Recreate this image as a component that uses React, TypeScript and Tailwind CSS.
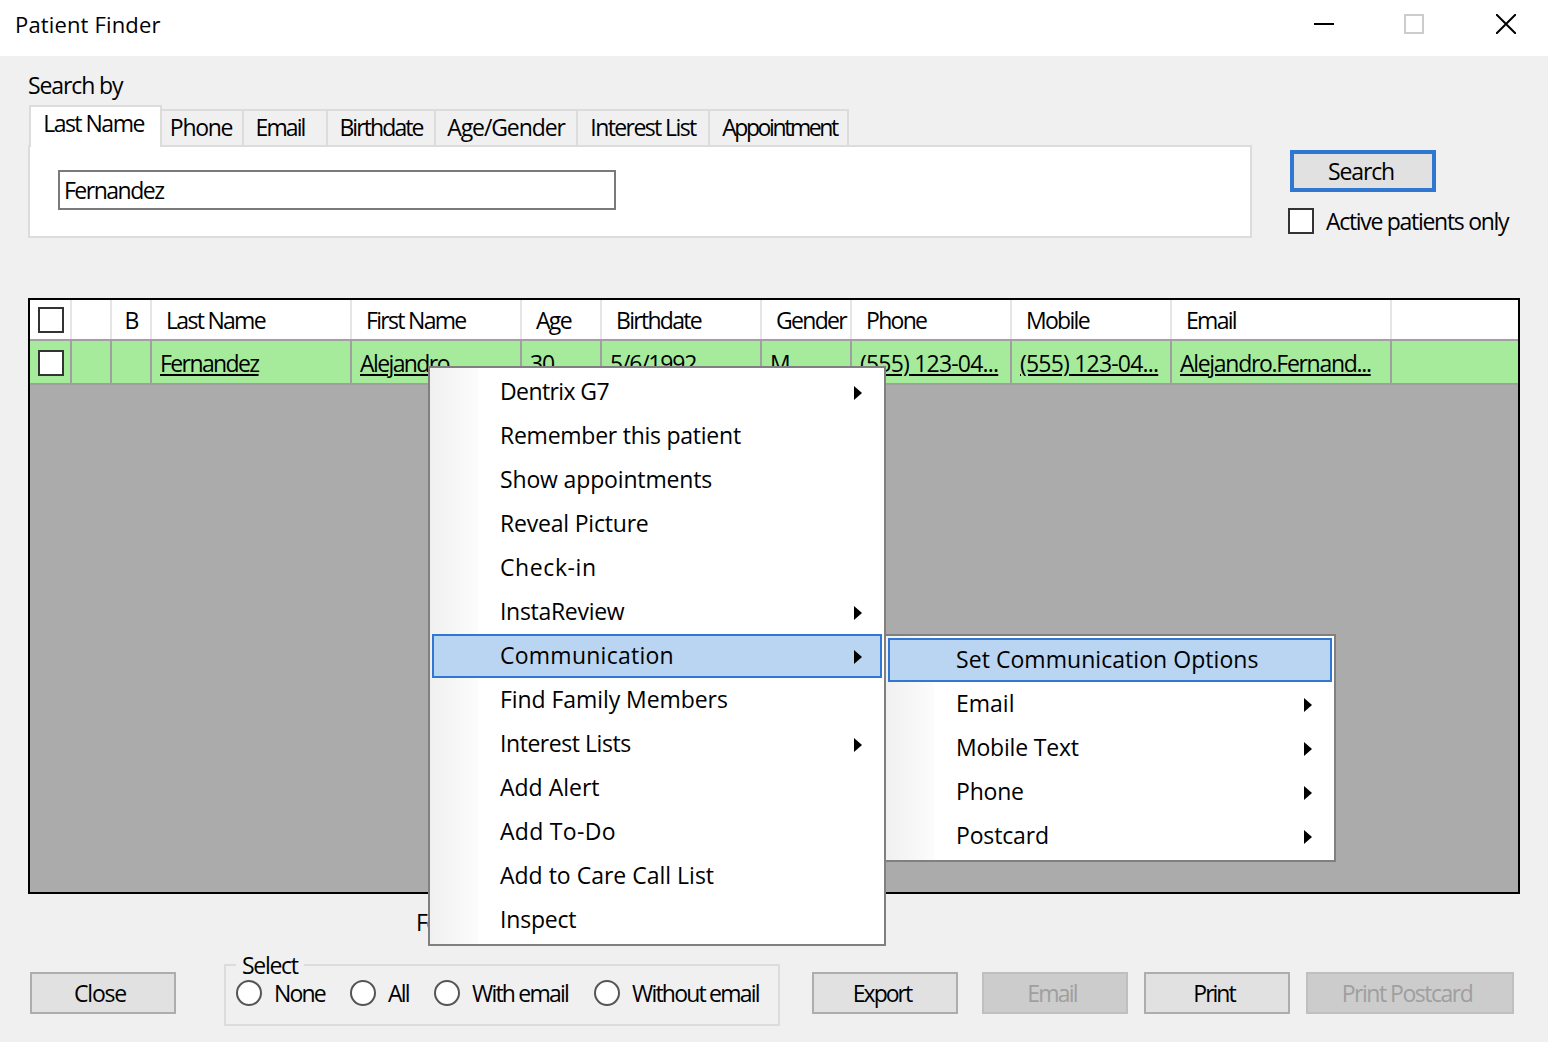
import React from 'react';

const tabs = [
  { label: 'Phone', w: 'w-[82px] pr-0.5', t: 'tracking-[-1.3px]' },
  { label: 'Email', w: 'w-[84px] pr-2.5', t: 'tracking-[-1.9px]' },
  { label: 'Birthdate', w: 'w-[108px]', t: 'tracking-[-1.9px]' },
  { label: 'Age/Gender', w: 'w-[142px]', t: 'tracking-[-1.1px]' },
  { label: 'Interest List', w: 'w-[132px]', t: 'tracking-[-1.6px]' },
  { label: 'Appointment', w: 'w-[139px] pl-0.5', t: 'tracking-[-2.4px]' },
];

const gridCols = 'grid grid-cols-[42px_40px_40px_200px_170px_80px_160px_90px_160px_160px_220px_1fr]';

const headers = ['Last Name', 'First Name', 'Age', 'Birthdate', 'Gender', 'Phone', 'Mobile', 'Email'];
const cells = [
  { v: 'Fernandez', t: 'tracking-[-1.6px]' },
  { v: 'Alejandro', t: 'tracking-[-1.6px]' },
  { v: '30', t: 'tracking-[-1.2px]' },
  { v: '5/6/1992', t: 'tracking-[-1.2px]' },
  { v: 'M', t: 'tracking-[-1.2px]' },
  { v: '(555) 123-04...', t: 'tracking-[-0.8px]' },
  { v: '(555) 123-04...', t: 'tracking-[-0.8px]' },
  { v: 'Alejandro.Fernand...', t: 'tracking-[-1.3px]' },
];

type Item = { label: string; sub?: boolean; active?: boolean; t?: string };

const mainMenu: Item[] = [
  { label: 'Dentrix G7', sub: true, t: 'tracking-[-0.6px]' },
  { label: 'Remember this patient', t: 'tracking-[-0.25px]' },
  { label: 'Show appointments', t: 'tracking-[-0.15px]' },
  { label: 'Reveal Picture', t: 'tracking-[-0.2px]' },
  { label: 'Check-in', t: 'tracking-[0.6px]' },
  { label: 'InstaReview', sub: true, t: 'tracking-[-0.3px]' },
  { label: 'Communication', sub: true, active: true, t: 'tracking-[0.25px]' },
  { label: 'Find Family Members', t: 'tracking-[-0.07px]' },
  { label: 'Interest Lists', sub: true, t: 'tracking-[-0.45px]' },
  { label: 'Add Alert', t: 'tracking-[0px]' },
  { label: 'Add To-Do', t: 'tracking-[0.3px]' },
  { label: 'Add to Care Call List', t: 'tracking-[0px]' },
  { label: 'Inspect', t: 'tracking-[-0.2px]' },
];

const subMenu: Item[] = [
  { label: 'Set Communication Options', active: true, t: 'tracking-[0.05px]' },
  { label: 'Email', sub: true, t: 'tracking-[0px]' },
  { label: 'Mobile Text', sub: true, t: 'tracking-[-0.2px]' },
  { label: 'Phone', sub: true, t: 'tracking-[-0.2px]' },
  { label: 'Postcard', sub: true, t: 'tracking-[-0.15px]' },
];

function Box() {
  return <div className="w-[26px] h-[26px] border-2 border-[#333] bg-white shrink-0" />;
}

function Button({ label, disabled, w }: { label: string; disabled?: boolean; w: string }) {
  return (
    <div
      className={`${w} h-[42px] flex items-center justify-center pr-1.5 border-2 ${
        disabled ? 'bg-[#cccccc] border-[#bfbfbf] text-[#9f9f9f]' : 'bg-[#e1e1e1] border-[#adadad] text-black'
      }`}
    >
      {label}
    </div>
  );
}

function Radio({ label, className }: { label: string; className: string }) {
  return (
    <div className={`flex items-center gap-3 h-[26px] ${className}`}>
      <div className="w-[26px] h-[26px] rounded-full border-2 border-[#555] bg-white shrink-0" />
      <span>{label}</span>
    </div>
  );
}

function Arrow() {
  return (
    <svg width="8" height="14" viewBox="0 0 8 14" className="shrink-0 mt-0.5">
      <path d="M0 0 L8 7 L0 14 Z" fill="#000" />
    </svg>
  );
}

function MenuRow({ item }: { item: Item }) {
  return (
    <div
      className={`relative h-[44px] flex items-center ${
        item.active ? 'bg-[#b9d5f1] border-2 border-[#2f77d0] pl-[66px] pr-[18px]' : 'pl-[68px] pr-5'
      }`}
    >
      <span className={`flex-1 pb-0.5 ${item.t}`}>{item.label}</span>
      {item.sub && <Arrow />}
    </div>
  );
}

export default function App() {
  return (
    <div className="relative w-[1548px] h-[1042px] overflow-hidden bg-[#f0f0f0] text-black font-['Open_Sans',sans-serif] text-[23px] tracking-[-1.5px]">
      {/* title bar */}
      <div className="h-14 bg-white flex items-center pl-[15px] pb-2">
        <span className="flex-1 tracking-[0.15px] text-[22px]">Patient Finder</span>
        <div className="w-5 h-0.5 bg-black" />
        <div className="w-5 h-5 ml-[70px] border-2 border-[#cccccc]" />
        <svg width="20" height="20" viewBox="0 0 20 20" className="ml-[72px] mr-8">
          <path d="M0 0 L20 20 M20 0 L0 20" stroke="#000" strokeWidth="2" />
        </svg>
      </div>

      <div className="pl-7 pr-7 pt-4">
        <div className="flex h-[166px]">
          <div className="w-[1224px]">
            <div className="h-[33px] leading-[27px] tracking-[-1.1px]">Search by</div>
            <div className="flex items-end h-10 pl-px">
              <div className="relative z-10 w-[133px] h-[42px] -mb-0.5 flex items-center justify-center pb-2 pr-1 bg-white border-2 border-b-0 border-[#dcdcdc] tracking-[-1.5px]">
                Last Name
              </div>
              {tabs.map((t) => (
                <div
                  key={t.label}
                  className={`${t.w} ${t.t} h-9 flex items-center justify-center pb-0.5 border-2 border-l-0 border-b-0 border-[#dcdcdc] bg-[#f0f0f0]`}
                >
                  {t.label}
                </div>
              ))}
            </div>
            <div className="h-[93px] bg-white border-2 border-[#dcdcdc] pl-7 pt-[23px]">
              <div className="w-[558px] h-10 border-2 border-[#7a7a7a] flex items-center pl-1">Fernandez</div>
            </div>
          </div>
          <div className="ml-[36px] pt-[78px]">
            <div className="ml-0.5 w-[146px] h-[42px] flex items-center justify-center pr-1 bg-[#e1e1e1] border-4 border-[#2f77d0] tracking-[-1.1px]">
              Search
            </div>
            <div className="flex items-center gap-3 mt-4 h-[26px]">
              <Box />
              <span className="whitespace-nowrap tracking-[-1.3px]">Active patients only</span>
            </div>
          </div>
        </div>

        {/* results grid */}
        <div className="mt-[60px] w-[1492px] h-[596px] bg-[#ababab] border-2 border-black">
          <div className={`${gridCols} h-[41px] bg-white border-b-2 border-[#a0a0a0] tracking-[-1.7px]`}>
            <div className="flex items-center pl-2 border-r-2 border-[#e5e5e5]">
              <Box />
            </div>
            <div className="border-r-2 border-[#e5e5e5]" />
            <div className="flex items-center justify-center pt-0.5 border-r-2 border-[#e5e5e5]">B</div>
            {headers.map((h) => (
              <div key={h} className="flex items-center pt-0.5 pl-[14px] border-r-2 border-[#e5e5e5] whitespace-nowrap">
                {h}
              </div>
            ))}
          </div>
          <div className={`${gridCols} h-[44px] bg-[#a6eb9c] border-b-2 border-[#a0a0a0]`}>
            <div className="flex items-center pt-0.5 pl-2 border-r-2 border-[#a0a0a0]">
              <Box />
            </div>
            <div className="border-r-2 border-[#a0a0a0]" />
            <div className="border-r-2 border-[#a0a0a0]" />
            {cells.map((c, i) => (
              <div key={i} className={`flex items-center pt-0.5 pl-2 border-r-2 border-[#a0a0a0] whitespace-nowrap ${c.t}`}>
                <span className="underline decoration-2 underline-offset-2">{c.v}</span>
              </div>
            ))}
          </div>
        </div>

        <div className="mt-4 ml-[388px] h-6 leading-6">Found</div>

        {/* bottom bar */}
        <div className="mt-[30px] flex items-start">
          <Button label="Close" w="w-[146px] mt-2 ml-0.5 tracking-[-1.2px]" />
          <div className="relative ml-12 w-[556px] h-[62px] border-2 border-[#dcdcdc]">
            <span className="absolute left-[10px] -top-[13px] px-1.5 bg-[#f0f0f0] leading-6 tracking-[-1.3px]">Select</span>
            <div className="flex pt-3.5 pl-2.5 tracking-[-1.8px]">
              <Radio label="None" className="w-[114px]" />
              <Radio label="All" className="w-[84px]" />
              <Radio label="With email" className="w-[160px]" />
              <Radio label="Without email" className="whitespace-nowrap" />
            </div>
          </div>
          <Button label="Export" w="w-[146px] mt-2 ml-8 tracking-[-2px]" />
          <Button label="Email" disabled w="w-[146px] mt-2 ml-6 tracking-[-1.8px]" />
          <Button label="Print" w="w-[146px] mt-2 ml-4 tracking-[-2px]" />
          <Button label="Print Postcard" disabled w="w-[208px] mt-2 ml-4" />
        </div>
      </div>

      {/* context menu */}
      <div className="absolute left-[428px] top-[366px] w-[458px] h-[580px] p-0.5 border-2 border-[#808080] bg-white">
        <div className="absolute left-0 top-0 bottom-0 w-12 bg-gradient-to-r from-[#f0f0f0] to-[#fcfcfc]" />
        {mainMenu.map((m) => (
          <MenuRow key={m.label} item={m} />
        ))}
      </div>

      {/* submenu */}
      <div className="absolute left-[884px] top-[634px] w-[452px] h-[228px] p-0.5 border-2 border-[#808080] bg-white">
        <div className="absolute left-0 top-0 bottom-0 w-12 bg-gradient-to-r from-[#f0f0f0] to-[#fcfcfc]" />
        {subMenu.map((m) => (
          <MenuRow key={m.label} item={m} />
        ))}
      </div>
    </div>
  );
}
